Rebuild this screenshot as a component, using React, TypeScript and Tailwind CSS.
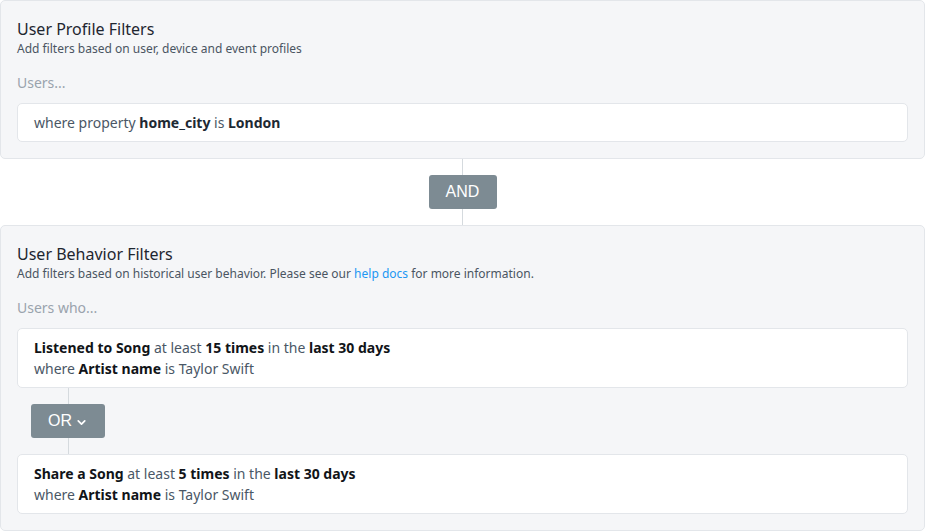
import { ChevronDown } from "lucide-react";

const font = { fontFamily: '"Noto Sans", "Open Sans", sans-serif' };

function Panel({ title, subtitle, lead, children }: { title: string; subtitle: React.ReactNode; lead: string; children: React.ReactNode }) {
  return (
    <div className="rounded-[5px] border border-[#e3e6ea] bg-[#f5f6f8] px-4 pt-4 pb-4">
      <div className="text-[16px] leading-6 text-[#1e2630]">{title}</div>
      <div className="text-[12px] leading-4 text-[#4a5562]">{subtitle}</div>
      <div className="mt-4 mb-[10px] text-[14px] leading-5 text-[#9aa3ad]">{lead}</div>
      {children}
    </div>
  );
}

function Card({ children }: { children: React.ReactNode }) {
  return (
    <div className="rounded-[5px] border border-[#e3e6ea] bg-white px-4 py-[8px] text-[14px] leading-[21px] text-[#4a5766]">
      {children}
    </div>
  );
}

const B = ({ children }: { children: React.ReactNode }) => <b className="font-bold text-[#111418]">{children}</b>;

const btn = "rounded-[3px] bg-[#7d8b93] text-white text-[16px] leading-none";
const btnFont = { fontFamily: '"Liberation Sans", Arial, sans-serif' };

export default function App() {
  return (
    <div className="w-[925px] h-[531px] bg-white" style={font}>
      <Panel title="User Profile Filters" subtitle="Add filters based on user, device and event profiles" lead="Users...">
        <div className="rounded-[5px] border border-[#e3e6ea] bg-white px-4 py-2 text-[14px] leading-[21px] text-[#4a5766]">
          where property <b className="font-bold text-[#1e2933]">home_city</b> is <b className="font-bold text-[#1e2933]">London</b>
        </div>
      </Panel>

      <div className="flex flex-col items-center">
        <div className="h-4 w-px bg-[#d5dade]" />
        <div className={`${btn} flex h-[34px] w-[68px] items-center justify-center`} style={btnFont}>AND</div>
        <div className="h-4 w-px bg-[#d5dade]" />
      </div>

      <Panel
        title="User Behavior Filters"
        subtitle={
          <>
            Add filters based on historical user behavior. Please see our <span className="text-[#2196f3]">help docs</span> for more information.
          </>
        }
        lead="Users who..."
      >
        <Card>
          <div><B>Listened to Song</B> at least <B>15 times</B> in the <B>last 30 days</B></div>
          <div>where <B>Artist name</B> is Taylor Swift</div>
        </Card>
        <div className="ml-[14px] flex w-[74px] flex-col items-center">
          <div className="h-4 w-px bg-[#d5dade]" />
          <div className={`${btn} flex h-[34px] w-[74px] items-center justify-center gap-[3px]`} style={btnFont}>
            OR <ChevronDown size={13} strokeWidth={3.2} className="mt-[2px]" />
          </div>
          <div className="h-4 w-px bg-[#d5dade]" />
        </div>
        <Card>
          <div><B>Share a Song</B> at least <B>5 times</B> in the <B>last 30 days</B></div>
          <div>where <B>Artist name</B> is Taylor Swift</div>
        </Card>
      </Panel>
    </div>
  );
}
